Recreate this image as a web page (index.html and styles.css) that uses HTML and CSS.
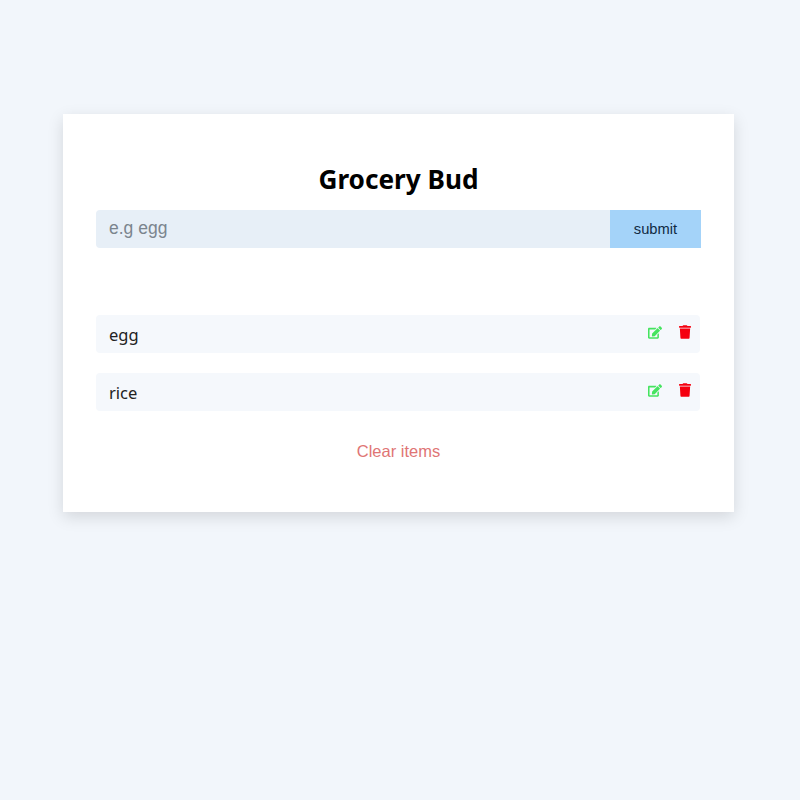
FILE: index.html
```html
<!DOCTYPE html>
<html lang="en">
<head>
    <meta charset="UTF-8">
    <meta name="viewport" content="width=device-width, initial-scale=1.0">
    <title>Grocery Bud</title>
    <link rel="stylesheet" href="styles.css">
</head>
<body>
    <section class="grocery-container">
        <h1>Grocery Bud</h1>

        <form class="grocery-form">
            <input type="text" class="grocery-input" placeholder="e.g egg">
            <button type="button" class="submit-btn">submit</button>
        </form>

        <ul class="grocery-list">
            <li class="grocery-item">
                <span class="item-title">egg</span>
                <div class="btn-container">
                    <svg class="edit-icon" viewBox="0 0 576 512"><path d="M402.6 83.2l90.2 90.2c3.8 3.8 3.8 10 0 13.8L274.4 405.6l-92.8 10.3c-12.4 1.4-22.9-9.1-21.5-21.5l10.3-92.8L388.8 83.2c3.8-3.8 10-3.8 13.8 0zm162-22.9l-48.8-48.8c-15.2-15.2-39.9-15.2-55.2 0l-35.4 35.4c-3.8 3.8-3.8 10 0 13.8l90.2 90.2c3.8 3.8 10 3.8 13.8 0l35.4-35.4c15.2-15.3 15.2-40 0-55.2zM384 346.2V448H64V128h229.8c3.2 0 6.2-1.3 8.5-3.5l40-40c7.6-7.6 2.2-20.5-8.5-20.5H48C21.5 64 0 85.5 0 112v352c0 26.5 21.5 48 48 48h352c26.5 0 48-21.5 48-48V306.2c0-10.7-12.9-16-20.5-8.5l-40 40c-2.2 2.3-3.5 5.3-3.5 8.5z"/></svg>
                    <svg class="delete-icon" viewBox="0 0 448 512"><path d="M432 32H312l-9.4-18.7A24 24 0 0 0 281.1 0H166.8a23.72 23.72 0 0 0-21.4 13.3L136 32H16A16 16 0 0 0 0 48v32a16 16 0 0 0 16 16h416a16 16 0 0 0 16-16V48a16 16 0 0 0-16-16zM53.2 467a48 48 0 0 0 47.9 45h245.8a48 48 0 0 0 47.9-45L416 128H32z"/></svg>
                </div>
            </li>
            <li class="grocery-item">
                <span class="item-title">rice</span>
                <div class="btn-container">
                    <svg class="edit-icon" viewBox="0 0 576 512"><path d="M402.6 83.2l90.2 90.2c3.8 3.8 3.8 10 0 13.8L274.4 405.6l-92.8 10.3c-12.4 1.4-22.9-9.1-21.5-21.5l10.3-92.8L388.8 83.2c3.8-3.8 10-3.8 13.8 0zm162-22.9l-48.8-48.8c-15.2-15.2-39.9-15.2-55.2 0l-35.4 35.4c-3.8 3.8-3.8 10 0 13.8l90.2 90.2c3.8 3.8 10 3.8 13.8 0l35.4-35.4c15.2-15.3 15.2-40 0-55.2zM384 346.2V448H64V128h229.8c3.2 0 6.2-1.3 8.5-3.5l40-40c7.6-7.6 2.2-20.5-8.5-20.5H48C21.5 64 0 85.5 0 112v352c0 26.5 21.5 48 48 48h352c26.5 0 48-21.5 48-48V306.2c0-10.7-12.9-16-20.5-8.5l-40 40c-2.2 2.3-3.5 5.3-3.5 8.5z"/></svg>
                    <svg class="delete-icon" viewBox="0 0 448 512"><path d="M432 32H312l-9.4-18.7A24 24 0 0 0 281.1 0H166.8a23.72 23.72 0 0 0-21.4 13.3L136 32H16A16 16 0 0 0 0 48v32a16 16 0 0 0 16 16h416a16 16 0 0 0 16-16V48a16 16 0 0 0-16-16zM53.2 467a48 48 0 0 0 47.9 45h245.8a48 48 0 0 0 47.9-45L416 128H32z"/></svg>
                </div>
            </li>
        </ul>

        <button type="button" class="clear-btn">Clear items</button>
    </section>
</body>
</html>
```

FILE: styles.css
```css
* {
    box-sizing: border-box;
}

body {
    font-family: 'Noto Sans', sans-serif;
    background-color: #f2f6fb;
    color: #222;
    margin: 0;
    min-height: 100vh;
    padding: 114px 0 0 63px;
}

.grocery-container {
    width: 671px;
    height: 398px;
    padding: 46px 33px 0;
    background-color: white;
    box-shadow: 0 5px 15px rgba(0,0,0,0.13);
}

h1 {
    font-size: 26.2px;
    line-height: 38px;
    font-weight: 700;
    color: #000;
    text-align: center;
    margin: 0 0 12px;
}

.grocery-form {
    display: flex;
    height: 38px;
}

.grocery-input {
    flex: 1;
    min-width: 0;
    padding: 0 13px 2px;
    background-color: #e7eff7;
    border: none;
    border-radius: 4px 0 0 4px;
    font-family: 'Liberation Sans', sans-serif;
    font-size: 17.5px;
}

.grocery-input::placeholder {
    color: #7b858e;
}

.submit-btn {
    width: 91px;
    background-color: #a4d3f9;
    color: #102a43;
    border: none;
    font-family: 'Liberation Sans', sans-serif;
    font-size: 14.7px;
}

.grocery-list {
    list-style: none;
    margin: 67px 1px 0 0;
    padding: 0;
}

.grocery-item {
    display: flex;
    justify-content: space-between;
    height: 37.5px;
    margin-bottom: 20.5px;
    padding: 0 9px 0 13px;
    background-color: #f5f8fc;
    border-radius: 4px;
}

.item-title {
    font-size: 16.5px;
    line-height: 39px;
}

.btn-container {
    display: flex;
    align-items: center;
    gap: 17.5px;
    margin-bottom: 3px;
}

.edit-icon {
    width: 14px;
    height: 13px;
    fill: #45e45f;
}

.delete-icon {
    width: 12px;
    height: 14px;
    fill: #f5000f;
}

.clear-btn {
    display: block;
    margin: 31px auto 0;
    padding: 0;
    background: none;
    border: none;
    color: #e07575;
    font-family: 'Liberation Sans', sans-serif;
    font-size: 16.5px;
}
```
